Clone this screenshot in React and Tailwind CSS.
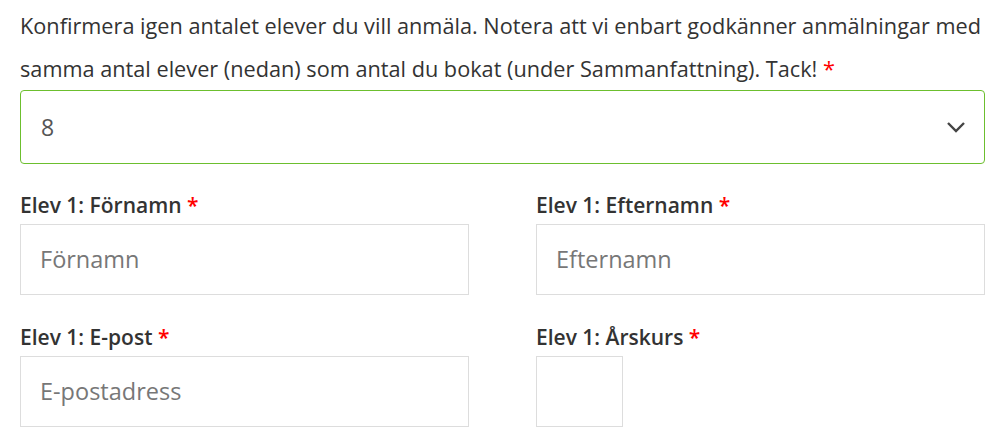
export default function App() {
  const font = { fontFamily: '"Open Sans", sans-serif' };
  const Req = () => <span className="text-[#ff0000]">*</span>;
  return (
    <div className="bg-white w-[1004px] h-[442px] overflow-hidden text-[#333]" style={font}>
      <div className="px-[20px] pt-[4px]">
        <p className="text-[21.7px] leading-[43px] text-[#333] w-[970px]">
          Konfirmera igen antalet elever du vill anmäla. Notera att vi enbart godkänner anmälningar med samma antal elever (nedan) som antal du bokat (under Sammanfattning). Tack! <Req />
        </p>
        <div className="h-[74px] w-[965px] border border-[#6cbf2e] rounded-[4px] flex items-center justify-between pl-[20px] pr-[18px]">
          <span className="text-[23px] text-[#555]">8</span>
          <svg width="20" height="12" viewBox="0 0 20 12" fill="none">
            <path d="M2 2 L10 10 L18 2" stroke="#444" strokeWidth="2.4" />
          </svg>
        </div>
        <div className="grid grid-cols-[449px_449px] gap-x-[67px] mt-[26px]">
          <div>
            <div className="text-[21px] font-semibold leading-[30px] text-[#333]">Elev 1: Förnamn <Req /></div>
            <div className="mt-[4px] h-[71px] border border-[#ddd] flex items-center px-[19px] text-[23.5px] text-[#777]">Förnamn</div>
          </div>
          <div>
            <div className="text-[21px] font-semibold leading-[30px] text-[#333]">Elev 1: Efternamn <Req /></div>
            <div className="mt-[4px] h-[71px] border border-[#ddd] flex items-center px-[19px] text-[23.5px] text-[#777]">Efternamn</div>
          </div>
          <div className="mt-[27px]">
            <div className="text-[21px] font-semibold leading-[30px] text-[#333]">Elev 1: E-post <Req /></div>
            <div className="mt-[4px] h-[71px] border border-[#ddd] flex items-center px-[19px] text-[23.5px] text-[#777]">E-postadress</div>
          </div>
          <div className="mt-[27px]">
            <div className="text-[21px] font-semibold leading-[30px] text-[#333]">Elev 1: Årskurs <Req /></div>
            <div className="mt-[4px] h-[71px] w-[87px] border border-[#ddd]"></div>
          </div>
        </div>
      </div>
    </div>
  );
}
